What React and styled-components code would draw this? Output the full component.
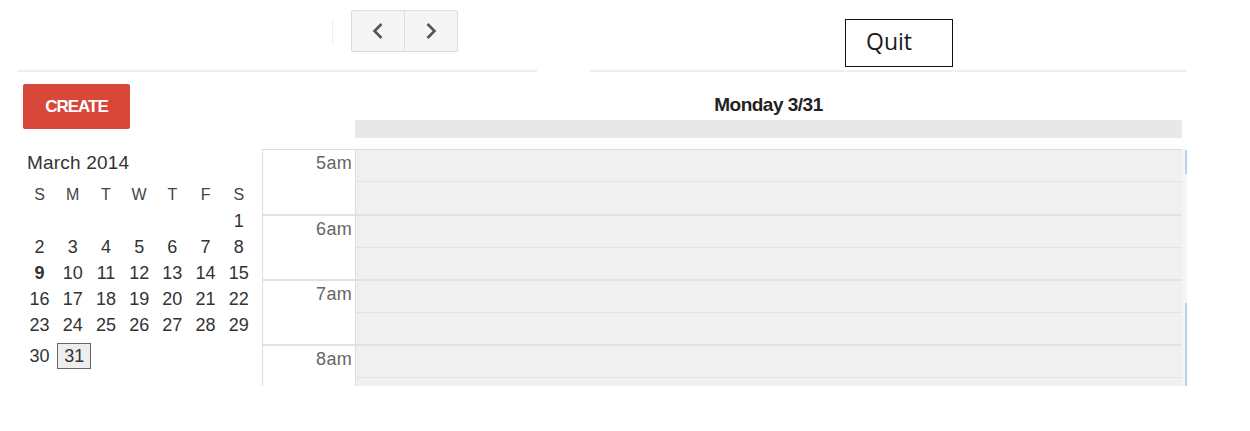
import React from 'react';
import styled, { createGlobalStyle } from 'styled-components';

const GlobalStyle = createGlobalStyle`
  html, body {
    margin: 0;
    padding: 0;
    background: #fff;
    font-family: "Liberation Sans", Arial, sans-serif;
  }
`;

const weekDays = ['S', 'M', 'T', 'W', 'T', 'F', 'S'];
const hours = ['5am', '6am', '7am', '8am'];

// March 2014 starts on a Saturday
const days = [];
for (let i = 0; i < 6; i++) days.push(null);
for (let d = 1; d <= 31; d++) days.push(d);

const Page = styled.div`
  width: 1250px;
  height: 431px;
  overflow: hidden;
`;

/* Top bar */

const TopBar = styled.div`
  display: flex;
  height: 72px;
`;

const LeftHead = styled.div`
  width: 520px;
  margin-left: 17px;
  border-bottom: 2px solid #eeeeee;
  display: flex;
  align-items: flex-start;
  padding-top: 10px;
  box-sizing: border-box;
`;

const Divider = styled.div`
  width: 1px;
  height: 26px;
  margin: 9px 18px 0 315px;
  background: #eeeeee;
`;

const NavGroup = styled.div`
  display: flex;
  border: 1px solid #dcdcdc;
  border-radius: 2px;
  background: #f5f5f5;
  height: 42px;
  box-sizing: border-box;
`;

const NavButton = styled.div`
  width: 52px;
  display: flex;
  align-items: center;
  justify-content: center;
  border-left: ${p => (p.$first ? 'none' : '1px solid #dcdcdc')};
`;

const RightHead = styled.div`
  width: 597px;
  margin-left: 53px;
  border-bottom: 2px solid #eeeeee;
  padding-top: 19px;
  padding-left: 255px;
  box-sizing: border-box;
`;

const QuitBox = styled.div`
  width: 108px;
  height: 48px;
  border: 1.5px solid #111;
  box-sizing: border-box;
  font-family: "Open Sans", "Liberation Sans", sans-serif;
  font-size: 23px;
  color: #1a1a1a;
  padding: 5px 0 0 20px;
`;

/* Body */

const Body = styled.div`
  display: flex;
`;

const Sidebar = styled.div`
  width: 239px;
  padding: 12px 0 0 23px;
  color: #333;
`;

const CreateButton = styled.div`
  width: 107px;
  height: 45px;
  border-radius: 2px;
  background: #d8473a;
  color: #fff;
  font-weight: bold;
  font-size: 17px;
  letter-spacing: -1px;
  display: flex;
  align-items: center;
  justify-content: center;
`;

const MonthTitle = styled.div`
  margin-top: 23px;
  padding-left: 4px;
  font-size: 19px;
  letter-spacing: 0.2px;
  line-height: 22px;
  color: #333;
`;

const MiniGrid = styled.div`
  margin-top: 8px;
  display: grid;
  grid-template-columns: repeat(7, 33.2px);
  grid-template-rows: repeat(6, 26px) 31px;
  align-items: end;
  font-size: 18px;
`;

const DayHead = styled.div`
  height: 26px;
  line-height: 26px;
  text-align: center;
  font-size: 16px;
  color: #444;
`;

const DayCell = styled.div`
  height: 26px;
  line-height: 26px;
  text-align: center;
  font-weight: ${p => (p.$bold ? 'bold' : 'normal')};
  color: #333;
  ${p =>
    p.$selected &&
    `
    width: 34px;
    margin-left: 1px;
    box-sizing: border-box;
    line-height: 24px;
    border: 1px solid #666;
    background: #eeeeee;
  `}
`;

const Main = styled.div`
  width: 925px;
  padding-top: 23px;
`;

const DayTitle = styled.div`
  margin-left: 93px;
  width: 827px;
  text-align: center;
  font-weight: bold;
  font-size: 19px;
  letter-spacing: -0.5px;
  line-height: 20px;
  color: #222;
`;

const AllDayBar = styled.div`
  margin: 5px 0 0 93px;
  width: 827px;
  height: 18px;
  background: #e8e8e8;
`;

const TimeGrid = styled.div`
  margin-top: 11px;
  display: flex;
  height: 237px;
  overflow: hidden;
`;

const TimeCol = styled.div`
  width: 92px;
  border-left: 1px solid #dddddd;
  background: #fff;
`;

const TimeLabel = styled.div`
  height: 65px;
  box-sizing: border-box;
  border-top: ${p => (p.$first ? '1px solid #dddddd' : '2px solid #e2e2e2')};
  text-align: right;
  padding: 3px 3px 0 0;
  font-size: 18px;
  letter-spacing: 0.3px;
  color: #666;
`;

const EventCol = styled.div`
  width: 827px;
  border-left: 1px solid #dddddd;
  background: #f0f0f0;
  box-sizing: border-box;
`;

const HourRow = styled.div`
  height: 65px;
  box-sizing: border-box;
  border-top: ${p => (p.$first ? '1px solid #dddddd' : '2px solid #e2e2e2')};
  display: flex;
  flex-direction: column;
`;

const HalfLine = styled.div`
  margin-top: 31px;
  height: 1px;
  background: #e2e2e2;
`;

const ScrollTrack = styled.div`
  width: 5px;
  background: #f4f4f4;
  display: flex;
  flex-direction: column;
  align-items: flex-end;
`;

const ScrollThumb = styled.div`
  width: 2px;
  height: ${p => p.$h}px;
  margin-top: ${p => p.$top}px;
  background: #bcd0ef;
`;

const Chevron = ({ dir }) => (
  <svg width="14" height="20" viewBox="0 0 14 20">
    <path
      d={dir === 'left' ? 'M10.5 3 L3.5 10 L10.5 17' : 'M3.5 3 L10.5 10 L3.5 17'}
      fill="none"
      stroke="#555"
      strokeWidth="2.6"
    />
  </svg>
);

export default function App() {
  return (
    <Page>
      <GlobalStyle />
      <TopBar>
        <LeftHead>
          <Divider />
          <NavGroup>
            <NavButton $first>
              <Chevron dir="left" />
            </NavButton>
            <NavButton>
              <Chevron dir="right" />
            </NavButton>
          </NavGroup>
        </LeftHead>
        <RightHead>
          <QuitBox>Quit</QuitBox>
        </RightHead>
      </TopBar>
      <Body>
        <Sidebar>
          <CreateButton>CREATE</CreateButton>
          <MonthTitle>March 2014</MonthTitle>
          <MiniGrid>
            {weekDays.map((d, i) => (
              <DayHead key={'h' + i}>{d}</DayHead>
            ))}
            {days.map((d, i) => (
              <DayCell key={i} $bold={d === 9} $selected={d === 31}>
                {d}
              </DayCell>
            ))}
          </MiniGrid>
        </Sidebar>
        <Main>
          <DayTitle>Monday 3/31</DayTitle>
          <AllDayBar />
          <TimeGrid>
            <TimeCol>
              {hours.map((h, i) => (
                <TimeLabel key={h} $first={i === 0}>
                  {h}
                </TimeLabel>
              ))}
            </TimeCol>
            <EventCol>
              {hours.map((h, i) => (
                <HourRow key={h} $first={i === 0}>
                  <HalfLine />
                </HourRow>
              ))}
            </EventCol>
            <ScrollTrack>
              <ScrollThumb $top={1} $h={26} />
              <ScrollThumb $top={129} $h={90} />
            </ScrollTrack>
          </TimeGrid>
        </Main>
      </Body>
    </Page>
  );
}
